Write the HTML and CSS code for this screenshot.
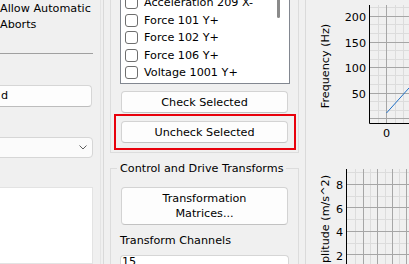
FILE: index.html
```html
<!DOCTYPE html>
<html lang="en">
<head>
  <meta charset="UTF-8" />
  <meta name="viewport" content="width=device-width, initial-scale=1.0"/>
  <title>Channel Setup</title>
  <link rel="stylesheet" href="styles.css">
</head>
<body>
  <div class="app">

    <div class="left">
      <div class="abort-opt">Allow Automatic<br>Aborts</div>
      <div class="rule"></div>
      <div class="field">d</div>
      <div class="select">
        <svg class="chevron" width="8" height="5" viewBox="0 0 8 5">
          <path d="M0.5 0.5L4 4L7.5 0.5" fill="none" stroke="#5f5f5f" stroke-width="1"/>
        </svg>
      </div>
      <div class="listbox"></div>
    </div>

    <div class="splitter"></div>

    <div class="middle">
      <div class="group channels">
        <div class="checklist">
          <ul class="rows">
            <li><span class="box"></span>Acceleration 209 X-</li>
            <li><span class="box"></span>Force 101 Y+</li>
            <li><span class="box"></span>Force 102 Y+</li>
            <li><span class="box"></span>Force 106 Y+</li>
            <li><span class="box"></span>Voltage 1001 Y+</li>
          </ul>
          <div class="scroll"><div class="thumb"></div></div>
        </div>
        <button class="btn check">Check Selected</button>
        <div class="highlight">
          <button class="btn">Uncheck Selected</button>
        </div>
      </div>

      <fieldset class="group transforms">
        <legend>Control and Drive Transforms</legend>
        <button class="btn tall">Transformation<br>Matrices...</button>
        <div class="caption">Transform Channels</div>
        <div class="field wide">15</div>
      </fieldset>
    </div>

    <div class="splitter thin"></div>

    <div class="charts">
      <!-- frequency plot -->
      <svg class="chart" width="103" height="140" viewBox="306 0 103 140">
        <path class="minor" d="M370 7.5H409M370 24.5H409M370 33.5H409M370 50.5H409M370 59.5H409M370 75.5H409M370 84.5H409M370 101.5H409M370 110.5H409M378.5 5V123M395.5 5V123M403.5 5V123"/>
        <path class="major" d="M370 16.5H409M370 42.5H409M370 67.5H409M370 93.5H409M370 118.5H409M386.5 5V123"/>
        <path class="trace" d="M386.5 113L409 88"/>
        <path class="axis" d="M369.5 5V123.5H409"/>
        <text class="tick" x="366" y="17">200</text>
        <text class="tick" x="366" y="43">150</text>
        <text class="tick" x="366" y="68">100</text>
        <text class="tick" x="366" y="94">50</text>
        <text class="tick mid" x="386.5" y="133">0</text>
        <text class="label mid" x="325" y="66" transform="rotate(-90 325 66)">Frequency (Hz)</text>
      </svg>

      <!-- amplitude plot -->
      <svg class="chart" width="103" height="124" viewBox="306 140 103 124">
        <path class="minor" d="M347 172.5H409M347 196.5H409M347 219.5H409M347 243.5H409M355.5 169V264M370.5 169V264M385.5 169V264M399.5 169V264"/>
        <path class="major" d="M347 184.5H409M347 207.5H409M347 231.5H409M347 254.5H409M363.5 169V264M377.5 169V264M392.5 169V264M406.5 169V264"/>
        <path class="axis" d="M346.5 169V264"/>
        <text class="tick" x="343" y="185">8</text>
        <text class="tick" x="343" y="209">6</text>
        <text class="tick" x="343" y="232">4</text>
        <text class="tick" x="343" y="256">2</text>
        <text class="label" x="325" y="175" transform="rotate(-90 325 175)">Amplitude (m/s^2)</text>
      </svg>
    </div>

  </div>
</body>
</html>
```

FILE: styles.css
```css
* {
  box-sizing: border-box;
}

body {
  margin: 0;
  background: #f0f0f0;
  color: #000;
  font-family: 'DejaVu Sans', sans-serif;
  font-size: 11.2px;
}

.app {
  display: flex;
  width: 409px;
  height: 264px;
  overflow: hidden;
}

/* left settings column */
.left {
  width: 93px;
  margin-right: 7px;
  flex-shrink: 0;
  display: flex;
  flex-direction: column;
}

.abort-opt {
  padding-top: 1px;
  line-height: 16px;
  white-space: nowrap;
}

.rule {
  margin-top: 20px;
  border-top: 1px solid #a0a0a0;
}

.field {
  margin: 31px 1px 0 -10px;
  padding: 0 2px 0 10px;
  height: 22px;
  line-height: 20px;
  background: #fdfdfd;
  border: 1px solid #d6d6d6;
  border-bottom-color: #bdbdbd;
  border-radius: 4px;
}

.select {
  margin: 30px 0 0 -10px;
  height: 21px;
  display: flex;
  align-items: center;
  justify-content: flex-end;
  padding-right: 5px;
  background: #fbfbfb;
  border: 1px solid #d6d6d6;
  border-radius: 4px;
}

.listbox {
  flex: 1;
  margin: 29px 0 0 -10px;
  background: #fff;
  border: 1px solid #e3e3e3;
}

.splitter {
  width: 4px;
  flex-shrink: 0;
  margin-right: 6px;
  border-left: 1px solid #e4e4e4;
  border-right: 1px solid #d9d9d9;
}

.splitter.thin {
  width: 1px;
  margin-right: 0;
  border: none;
  background: #dadada;
}

/* middle column */
.middle {
  width: 189px;
  margin-right: 6px;
  flex-shrink: 0;
  display: flex;
  flex-direction: column;
}

.group {
  display: flex;
  flex-direction: column;
  border: 1px solid #dcdcdc;
}

.channels {
  margin-top: -12px;
  padding: 1px 0 2px;
}

.checklist {
  display: flex;
  margin: 0 8px 0 9px;
  padding: 3px 0 1.5px 4px;
  background: #fff;
  border: 1px solid #828790;
}

.rows {
  flex: 1;
  margin: 0;
  padding: 0;
  list-style: none;
}

.rows li {
  height: 17.5px;
  display: flex;
  align-items: center;
  white-space: nowrap;
}

.box {
  width: 13px;
  height: 13px;
  margin-right: 6px;
  background: #fff;
  border: 1px solid #6e6e6e;
  border-radius: 3px;
}

.scroll {
  width: 12px;
}

.thumb {
  width: 3px;
  height: 27px;
  margin-top: -3px;
  background: #8a8a8a;
  border-radius: 2px;
}

.btn {
  display: block;
  height: 22px;
  padding: 0;
  font: inherit;
  color: #000;
  background: #fdfdfd;
  border: 1px solid #d3d3d3;
  border-bottom-color: #c2c2c2;
  border-radius: 4px;
}

.check {
  margin: 7px 10px 0;
}

.highlight {
  display: flex;
  flex-direction: column;
  margin: 1px 2px 0 3px;
  padding: 5px 6px 5px 5px;
  border: 2px solid #e8000b;
}

.transforms {
  margin: 8px 0 0;
  padding: 0 9px;
  min-width: 0;
}

.transforms legend {
  margin-left: -3px;
  padding: 0 3px;
  line-height: 15px;
  white-space: nowrap;
}

.tall {
  height: 38px;
  margin: 11px 1px 0;
  line-height: 15px;
}

.caption {
  margin-top: 9px;
  line-height: 14px;
}

.field.wide {
  margin: 7px 0 0;
  padding: 0 2px 0 1px;
  line-height: 12px;
  background: #fff;
}

/* charts */
.charts {
  width: 103px;
  flex-shrink: 0;
  display: flex;
  flex-direction: column;
}

.chart {
  display: block;
}

.chart path {
  fill: none;
  stroke-width: 1;
}

.chart .minor {
  stroke: #dcdcdc;
}

.chart .major {
  stroke: #a6a6a6;
}

.chart .axis {
  stroke: #000;
}

.chart .trace {
  stroke: #1f6fc5;
}

.chart text {
  font-size: 11.2px;
  fill: #000;
  dominant-baseline: central;
}

.chart .tick {
  text-anchor: end;
}

.chart .label {
  text-anchor: end;
}

.chart .mid {
  text-anchor: middle;
}
```
